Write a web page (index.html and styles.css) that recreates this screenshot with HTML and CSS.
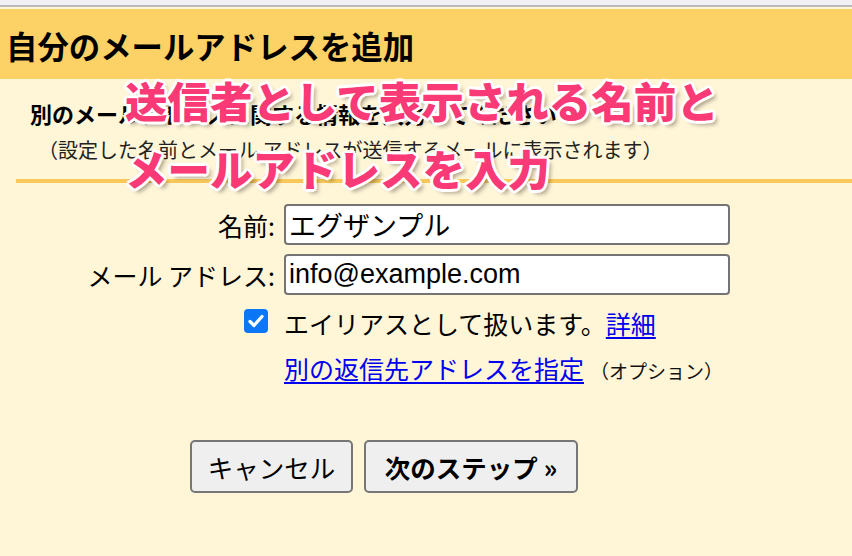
FILE: index.html
```html
<!DOCTYPE html>
<html lang="ja">
<head>
<meta charset="utf-8">
<title>自分のメールアドレスを追加</title>
<link rel="stylesheet" href="styles.css">
</head>
<body>
<div class="chrome"></div>
<header class="header"><h1 class="title">自分のメールアドレスを追加</h1></header>
<main class="content">
  <div class="intro">
    <p class="subtitle">別のメールアドレスに関する情報を入力してください</p>
    <p class="note">（設定した名前とメール アドレスが送信するメールに表示されます）</p>
  </div>
  <div class="divider"></div>
  <div class="form">
    <label class="lbl" for="n">名前:</label>
    <input class="field" id="n" type="text" value="エグザンプル">
    <label class="lbl" for="e">メール アドレス:</label>
    <input class="field" id="e" type="text" value="info@example.com">
    <div class="lbl"><span class="check"><svg width="24" height="24" viewBox="0 0 24 24"><path d="M6 12.5l4 4 8-9" fill="none" stroke="#fff" stroke-width="3.2" stroke-linecap="round" stroke-linejoin="round"/></svg></span></div>
    <div class="line">エイリアスとして扱います。<a class="link" href="#">詳細</a></div>
    <div class="lbl"></div>
    <div class="line"><a class="link" href="#">別の返信先アドレスを指定</a><span class="opt">（オプション）</span></div>
  </div>
  <div class="actions">
    <button class="btn cancel" type="button">キャンセル</button>
    <button class="btn next" type="button">次のステップ »</button>
  </div>
  <div class="overlay">送信者として表示される名前と<br>メールアドレスを入力</div>
</main>
</body>
</html>
```

FILE: styles.css
```css
html, body {
  margin: 0;
  padding: 0;
}
body {
  background: #fff5d7;
  font-family: "Liberation Sans", "Noto Sans CJK JP", sans-serif;
  color: #000;
  width: 852px;
  height: 556px;
  overflow: hidden;
}
.chrome {
  height: 5px;
  background: #f1f1f3;
  border-bottom: 2px solid #b9b9bd;
  margin-bottom: 2px;
}
.header {
  background: #fcd166;
  height: 70px;
  box-sizing: border-box;
  padding: 4px 0 0 6px;
}
.title {
  margin: 0;
  font-size: 31.4px;
  line-height: 66px;
  font-weight: bold;
  font-family: "Noto Sans CJK JP", sans-serif;
}
.content {
  position: relative;
}
.intro {
  padding-left: 30px;
  margin-top: 19px;
}
.subtitle {
  margin: 0;
  font-size: 22px;
  line-height: 30px;
  font-weight: bold;
  font-family: "Noto Sans CJK JP", sans-serif;
}
.note {
  margin: 8px 0 0 8px;
  font-size: 20px;
  line-height: 28px;
  color: #222;
  font-family: "Noto Sans CJK JP", sans-serif;
}
.divider {
  margin: 15px 0 0 16px;
  height: 4px;
  background: #f8c95a;
}
.form {
  margin-top: 21px;
  display: grid;
  grid-template-columns: 275px 446px;
  column-gap: 9px;
  grid-template-rows: 41px 41px 30px 30px;
  row-gap: 9px;
}
.lbl {
  justify-self: end;
  align-self: center;
  font-size: 25px;
  line-height: 30px;
  font-family: "Noto Sans CJK JP", sans-serif;
  display: flex;
  align-items: center;
}
.field {
  box-sizing: border-box;
  width: 446px;
  height: 41px;
  margin: 0;
  border: 2px solid #747474;
  border-radius: 4px;
  background: #fff;
  padding: 0 0 0 3px;
  font-size: 27px;
  font-family: "Liberation Sans", "Noto Sans CJK JP", sans-serif;
  color: #000;
}
.check {
  display: block;
  width: 24px;
  height: 24px;
  border-radius: 4px;
  background: #0b77f7;
  margin-right: 7px;
  margin-top: 4px;
}
.check svg {
  display: block;
}
.line {
  align-self: center;
  font-size: 25px;
  line-height: 30px;
  font-family: "Noto Sans CJK JP", sans-serif;
  white-space: nowrap;
}
.form .line {
  position: relative;
  top: 4px;
}
.form .line + .lbl + .line {
  top: 11px;
}
.link {
  color: #0000ee;
  text-decoration: underline;
  text-underline-offset: 3px;
  text-decoration-thickness: 1.5px;
}
.opt {
  font-size: 19px;
  margin-left: 6px;
  color: #111;
}
.actions {
  display: flex;
  gap: 11px;
  padding-left: 190px;
  margin-top: 67px;
}
.btn {
  box-sizing: border-box;
  height: 53px;
  margin: 0;
  background: #efefef;
  border: 2px solid #767676;
  border-radius: 5px;
  font-family: "Noto Sans CJK JP", sans-serif;
  font-size: 25.5px;
  color: #000;
  padding: 0;
}
.cancel {
  width: 163px;
}
.next {
  width: 214px;
  font-weight: bold;
}
.overlay {
  position: absolute;
  left: 125px;
  top: -32px;
  font-family: "Noto Sans CJK JP", sans-serif;
  font-weight: 900;
  font-size: 42.5px;
  line-height: 68px;
  color: #f93a76;
  white-space: nowrap;
  text-shadow:
    3px 0 0 #fff, -3px 0 0 #fff, 0 3px 0 #fff, 0 -3px 0 #fff,
    2px 2px 0 #fff, -2px -2px 0 #fff, 2px -2px 0 #fff, -2px 2px 0 #fff,
    4px 4px 4px rgba(0, 0, 0, 0.35);
}
```
